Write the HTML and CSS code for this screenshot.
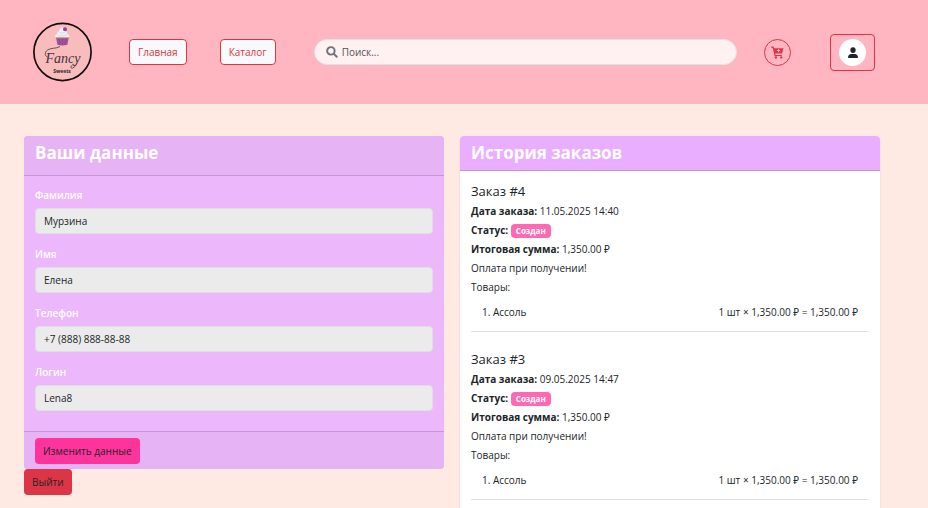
FILE: index.html
```html
<!DOCTYPE html>
<html lang="ru">
<head>
<meta charset="utf-8">
<meta name="viewport" content="width=device-width, initial-scale=1">
<title>Fancy Sweets</title>
<link rel="stylesheet" href="styles.css">
</head>
<body>
<header class="topbar">
  <a class="logo" href="#" aria-label="Fancy Sweets">
    <svg viewBox="0 0 60 60" width="60" height="60">
      <circle cx="29.500" cy="30" r="28.600" fill="#f8bcbc" stroke="#130d10" stroke-width="1.700"/>
      <path d="M23 15.500h12.800l-1.400 7.300q-5 1.400-10 0z" fill="#a4529c"/>
      <path d="M26 17l1 6M29.500 17v6M33 17l-1 6" stroke="#8a3d88" stroke-width=".6"/>
      <path d="M22.300 15.800c-.8-2 .4-3.300 1.800-3.500-.3-2 .8-3 2-3.100.1-2 1.300-3.100 2.800-4 1.500.7 3.400 1.500 3.400 3.700 1.400.3 2 1.500 1.700 3.200 1.800.2 3 1.900 2.200 3.700z" fill="#eef0f6"/>
      <path d="M24.500 13.500c3 1 7 .6 9.500-.8M26.500 10.500c2 .8 4 .6 6-.4" fill="none" stroke="#d4d4e2" stroke-width=".8"/>
      <path d="M22.500 15.800h13.700" stroke="#c58a57" stroke-width=".9"/>
      <circle cx="32" cy="7.300" r="2" fill="#9c3f96"/>
      <text class="logo-script" x="30" y="41" text-anchor="middle">Fancy</text>
      <path d="M14.500 35c-3-1-3-5 0-7 4-2.500 8-1 12.500-3.500M41 42c-4 2-4 4.500-1.500 4 2-.5 3.500-2.500 4.500-5" fill="none" stroke="#45353c" stroke-width=".8"/>
      <text class="logo-sub" x="29" y="51" text-anchor="middle">Sweets</text>
    </svg>
  </a>
  <nav class="nav">
    <a class="nav-link" href="#">Главная</a>
    <a class="nav-link" href="#">Каталог</a>
  </nav>
  <label class="search">
    <svg viewBox="0 0 16 16" width="12" height="12" aria-hidden="true"><circle cx="6.500" cy="6.500" r="5" fill="none" stroke="#6c757d" stroke-width="2.600"/><path d="M10.300 10.300l4 4" stroke="#6c757d" stroke-width="2.600" stroke-linecap="round"/></svg>
    <input type="search" placeholder="Поиск..." aria-label="Поиск">
  </label>
  <button class="cart" type="button" aria-label="Корзина">
    <svg viewBox="0 0 24 24" width="13" height="13" aria-hidden="true"><path d="M.5 2H4l3.500 15.500H20" fill="none" stroke="#dc3545" stroke-width="2.200"/><path d="M5 4h18l-2.500 10H7.300z" fill="#dc3545"/><path d="M14 5.500v6M11 8.500h6" stroke="#ffb6c1" stroke-width="1.900"/><circle cx="9" cy="21" r="2.200" fill="#dc3545"/><circle cx="19" cy="21" r="2.200" fill="#dc3545"/></svg>
  </button>
  <button class="user" type="button" aria-label="Профиль">
    <span class="user-disc"><svg viewBox="0 0 16 16" width="10" height="11" preserveAspectRatio="none" aria-hidden="true"><circle cx="8" cy="4.500" r="4.300" fill="#212529"/><path d="M1 16c-.6 0-1-.4-1-1C0 12 2.500 10 5 10h6c2.500 0 5 2 5 5 0 .6-.4 1-1 1z" fill="#212529"/></svg></span>
  </button>
</header>
<main class="page">
  <section class="column">
    <form class="card profile">
      <h2 class="card-head">Ваши данные</h2>
      <div class="fields">
        <div class="field"><label for="surname">Фамилия</label><input id="surname" value="Мурзина" readonly></div>
        <div class="field"><label for="name">Имя</label><input id="name" value="Елена" readonly></div>
        <div class="field"><label for="phone">Телефон</label><input id="phone" type="tel" value="+7 (888) 888-88-88" readonly></div>
        <div class="field"><label for="login">Логин</label><input id="login" value="Lena8" readonly></div>
      </div>
      <div class="card-foot"><button class="btn btn-edit" type="button">Изменить данные</button></div>
    </form>
    <button class="btn btn-exit" type="button">Выйти</button>
  </section>
  <section class="column card orders">
    <h2 class="card-head">История заказов</h2>
    <div class="order-list">
      <article class="order">
        <h3>Заказ #4</h3>
        <p><b>Дата заказа:</b> 11.05.2025 14:40</p>
        <p><b>Статус:</b> <span class="badge">Создан</span></p>
        <p><b>Итоговая сумма:</b> 1,350.00 ₽</p>
        <p>Оплата при получении!</p>
        <p>Товары:</p>
        <div class="item"><span>1. Ассоль</span><span>1 шт × 1,350.00 ₽ = 1,350.00 ₽</span></div>
      </article>
      <article class="order">
        <h3>Заказ #3</h3>
        <p><b>Дата заказа:</b> 09.05.2025 14:47</p>
        <p><b>Статус:</b> <span class="badge">Создан</span></p>
        <p><b>Итоговая сумма:</b> 1,350.00 ₽</p>
        <p>Оплата при получении!</p>
        <p>Товары:</p>
        <div class="item"><span>1. Ассоль</span><span>1 шт × 1,350.00 ₽ = 1,350.00 ₽</span></div>
      </article>
    </div>
  </section>
</main>
</body>
</html>
```
FILE: styles.css
```css
* { box-sizing: border-box; }
body {
  margin: 0;
  background: #ffe9e3;
  color: #212529;
  font: 10px/16px "Open Sans", "Noto Sans", sans-serif;
}
h2, h3, p { margin: 0; }
button, input { font: inherit; color: inherit; }
svg { display: block; }

.topbar {
  display: flex;
  align-items: center;
  height: 104px;
  padding: 0 53px 0 33px;
  background: #ffb6c1;
}
.logo-script { font: italic 14px "Liberation Serif", serif; fill: #45353c; }
.logo-sub { font: bold 5px "Open Sans", sans-serif; fill: #33262c; }
.nav { display: flex; gap: 33px; margin: 0 38px 0 36px; }
.nav-link {
  padding: 4px 8px;
  border: 1px solid #dc3545;
  border-radius: 4px;
  background: #f8f9fa;
  color: #dc3545;
  text-decoration: none;
}
.search {
  flex: 1;
  display: flex;
  align-items: center;
  gap: 4px;
  height: 26px;
  padding: 0 11px;
  border: 1px solid #dee2e6;
  border-radius: 13px;
  background: #fff0f2;
}
.search input {
  flex: 1;
  min-width: 0;
  padding: 0;
  border: 0;
  outline: 0;
  background: none;
}
.search input::placeholder { color: #53565c; opacity: 1; }
.cart {
  display: grid;
  place-items: center;
  width: 27px;
  height: 27px;
  margin: 0 39px 0 27px;
  padding: 0;
  border: 1px solid #dc3545;
  border-radius: 50%;
  background: none;
}
.user {
  padding: 4px 8px;
  border: 1px solid #dc3545;
  border-radius: 4px;
  background: none;
}
.user-disc {
  display: grid;
  place-items: center;
  width: 27px;
  height: 27px;
  border-radius: 50%;
  background: #fff;
}

.page {
  display: grid;
  grid-template-columns: 1fr 1fr;
  align-items: start;
  gap: 16px;
  padding: 32px 48px 0 24px;
}
.card {
  overflow: hidden;
  border-radius: 4px;
}
.card-head {
  padding: 5px 11px;
  border-bottom: 1px solid #c695d6;
  color: #fff;
  font-size: 17px;
  font-weight: 700;
  line-height: 24px;
}
.profile { background: #ecb8fb; }
.profile .card-head { padding-bottom: 10px; background: #e6b3f5; }
.fields { padding: 11px 11px 8px; }
.field { display: grid; gap: 5px; margin-bottom: 12px; }
.field label { color: #fff; font-weight: 600; }
.field input {
  width: 100%;
  height: 26px;
  padding: 0 8px;
  border: 1px solid #dedfe0;
  border-radius: 4px;
  background: #ebebeb;
}
.card-foot {
  padding: 6px 11px 5px;
  border-top: 1px solid #c695d6;
  background: #e6b3f5;
}
.btn {
  display: block;
  padding: 5px 8px;
  border: 0;
  border-radius: 4px;
}
.btn-edit { background: #ff339c; }
.btn-exit { background: #dc3545; }

.orders { background: #fff; box-shadow: 0 1px 3px rgba(0, 0, 0, .08); }
.orders .card-head { background: #e9aeff; }
.order-list { padding: 11px; }
.order { margin-bottom: 18px; border-bottom: 1px solid #dee2e6; }
.order h3 {
  margin-bottom: 2px;
  font-size: 13px;
  font-weight: 500;
  line-height: 18px;
}
.order p { line-height: 19px; }
.order b { font-weight: 700; }
.badge {
  display: inline-block;
  padding: 0 5px;
  border-radius: 4px;
  background: #ff69b4;
  color: #fff;
  font-size: 8px;
  font-weight: 700;
  line-height: 14px;
}
.item {
  display: flex;
  justify-content: space-between;
  padding: 7px 11px 11px;
}
```
